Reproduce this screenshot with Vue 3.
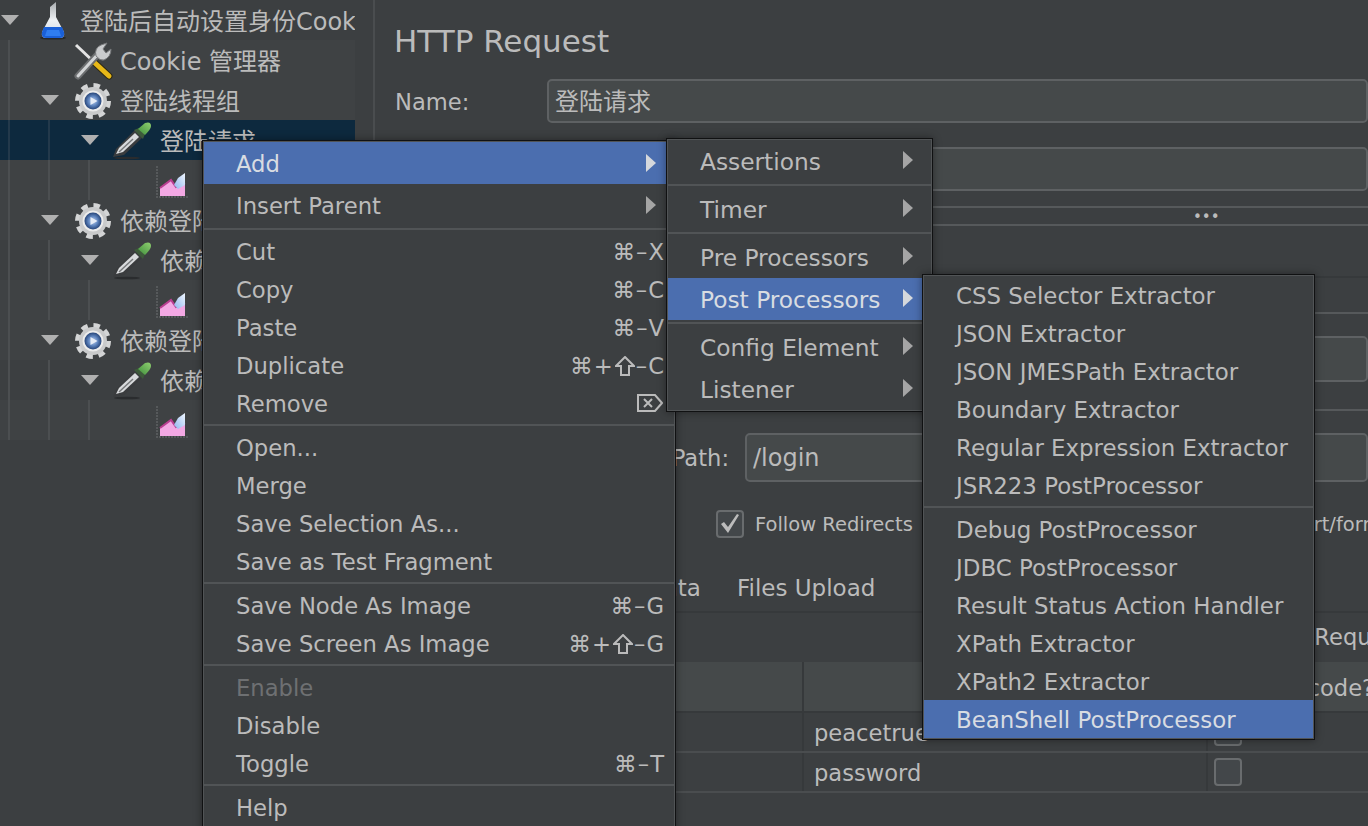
<template>
  <div class="app">
    <!-- shared tree icons -->
    <svg class="defs" width="0" height="0">
      <defs>
        <linearGradient id="glass" x1="0" y1="0" x2="0" y2="1">
          <stop offset="0" stop-color="#a9adb0" />
          <stop offset="0.5" stop-color="#eef1f4" />
          <stop offset="1" stop-color="#cfd8e2" />
        </linearGradient>
        <radialGradient id="hub" cx="0.5" cy="0.5" r="0.55">
          <stop offset="0" stop-color="#c4d2ec" />
          <stop offset="0.5" stop-color="#5f85bf" />
          <stop offset="1" stop-color="#1a3669" />
        </radialGradient>
        <linearGradient id="bulb" x1="0" y1="1" x2="1" y2="0">
          <stop offset="0" stop-color="#3f8f3c" />
          <stop offset="1" stop-color="#8fcf70" />
        </linearGradient>
        <linearGradient id="shard" x1="1" y1="0" x2="0" y2="1">
          <stop offset="0" stop-color="#f0f6ff" />
          <stop offset="1" stop-color="#8fb6ee" />
        </linearGradient>
      </defs>
      <symbol id="i-flask" viewBox="0 0 40 40">
        <ellipse cx="20" cy="38" rx="13" ry="1.6" fill="#26282a" />
        <path d="M17 7 L23 2 L23 17 L31 32 Q32 38 27 38 L13 38 Q8 38 9 32 L17 17 Z" fill="url(#glass)" />
        <path d="M11 27 L29 27 L31 32 Q32 38 27 38 L13 38 Q8 38 9 32 Z" fill="#1a60d8" />
        <path d="M14 30 L26 30 L28 36 L12 36 Z" fill="#2f7df0" />
      </symbol>
      <symbol id="i-tools" viewBox="0 0 40 40">
        <path d="M3 5 L22 23" stroke="#e4e4e4" stroke-width="3" />
        <path d="M22 23 L36 36" stroke="#2e2a14" stroke-width="7" stroke-linecap="round" />
        <path d="M22 23 L36 36" stroke="#e8b818" stroke-width="5" stroke-linecap="round" />
        <path d="M5 36 L26 13" stroke="#6c6e70" stroke-width="7" stroke-linecap="round" />
        <path d="M5 36 L26 13" stroke="#d2d4d6" stroke-width="3" stroke-linecap="round" />
        <path d="M23 16 Q21 8 28 5 L34 3 L30 9 L33 13 L38 9 Q38 17 31 20 Q27 21 23 16 Z" fill="#c9cbcd" stroke="#77797b" stroke-width="1" />
      </symbol>
      <symbol id="i-gear" viewBox="0 0 40 40">
        <circle cx="20" cy="21" r="15" fill="none" stroke="#d4d5d6" stroke-width="6" stroke-dasharray="6.2 5.58" />
        <circle cx="20" cy="21" r="14" fill="#c9cacb" />
        <circle cx="20" cy="21" r="10.5" fill="#ececec" />
        <circle cx="20" cy="21" r="8.5" fill="url(#hub)" />
        <path d="M17.5 17 L24.5 21 L17.5 25 Z" fill="#e6ecf6" />
      </symbol>
      <symbol id="i-dropper" viewBox="0 0 40 40">
        <ellipse cx="14" cy="38" rx="13" ry="1.3" fill="#2a2c2e" />
        <path d="M0 37 L3 29 L22 10 L30 17 L11 35 Z" fill="#3a3c3e" />
        <path d="M3 34 L6 28 L22 13 L26 17 L10 32 Z" fill="#d8dadc" />
        <path d="M6 32 L20 19" stroke="#77797b" stroke-width="1.5" />
        <path d="M21 10 L26 8 L32 14 L30 19 Z" fill="#3d5a3a" />
        <path d="M25 9 L32 3 Q38 1 38 6 Q38 9 32 15 Z" fill="url(#bulb)" />
      </symbol>
      <symbol id="i-chart" viewBox="0 0 40 40">
        <path d="M4 6 L4 37 L36 37" fill="none" stroke="#56595b" stroke-width="2" stroke-dasharray="2 1" />
        <path d="M7 36 L7 28 L18 20 L23 27 L32 23 L32 36 Z" fill="#f3a8e4" stroke-width="0" />
        <path d="M7 28 L18 20 L23 27 L32 23" fill="none" stroke="#b93f92" stroke-width="2" />
        <path d="M32 13 L25 18 L21 25 L25 29 L32 25 Z" fill="url(#shard)" />
      </symbol>
    </svg>

    <!-- test plan tree -->
    <aside class="tree">
      <div
        v-for="(row, i) in treeRows"
        :key="i"
        class="tree-row"
        :class="{ selected: row.selected, alt: row.alt }"
      >
        <span v-for="n in row.guides" :key="n" class="cell guide"></span>
        <span class="cell">
          <i v-if="row.open" class="twisty"></i>
        </span>
        <svg class="tree-icon" width="40" height="40"><use :href="'#i-' + row.icon" /></svg>
        <span class="tree-label">{{ row.label }}</span>
      </div>
    </aside>

    <!-- http request form -->
    <main class="panel">
      <h1 class="title">HTTP Request</h1>

      <div class="field-row">
        <label class="field-label">Name:</label>
        <input class="text-input name-input" value="登陆请求" />
      </div>
      <div class="field-row comments">
        <label class="field-label">Comments:</label>
        <input class="text-input" value="" />
      </div>

      <div class="collapse-bar"><span>•••</span></div>

      <div class="rule-dark"></div>
      <div class="rule-light"></div>
      <input class="text-input wide-input" value="" />
      <div class="rule-light second"></div>

      <div class="path-row">
        <label class="path-label">Path:</label>
        <input class="text-input" value="/login" />
      </div>

      <div class="check-row">
        <span class="check-text first">Redirect Automatically</span>
        <span class="checkbox on">
          <svg width="24" height="24" viewBox="0 0 24 24"><path d="M3 12 L6 10 L10 15 L19 2 L21 3 L10 21 Z" fill="#bcbcbc" /></svg>
        </span>
        <span class="check-text">Follow Redirects</span>
        <span class="check-text last">Use multipart/form-data</span>
      </div>

      <div class="tabs">
        <span>Parameters</span>
        <span>Body Data</span>
        <span>Files Upload</span>
      </div>

      <div class="send-row">Send Parameters With the Request:</div>

      <div class="table">
        <div class="t-row t-head">
          <div class="t-cell">Name:</div>
          <div class="t-cell">Value</div>
          <div class="t-cell encode">URL Encode?</div>
        </div>
        <div v-for="p in params" :key="p.value" class="t-row">
          <div class="t-cell">{{ p.name }}</div>
          <div class="t-cell">{{ p.value }}</div>
          <div class="t-cell check-cell"><span class="checkbox"></span></div>
        </div>
      </div>
    </main>

    <!-- context menu and its submenus -->
    <div v-for="menu in menus" :key="menu.id" class="menu" :class="menu.id">
      <template v-for="(item, i) in menu.items" :key="i">
        <div v-if="item.sep" class="menu-sep"></div>
        <div
          v-else
          class="menu-item"
          :class="{ active: item.active, disabled: item.disabled, tall: item.arrow }"
        >
          <span>{{ item.label }}</span>
          <i v-if="item.arrow" class="arrow"></i>
          <span v-else-if="item.keys" class="keys">
            <template v-if="item.shift">⌘+<svg class="shift-key" width="20" height="20" viewBox="0 0 20 20"><path d="M10 1 L19 10 H14 V19 H6 V10 H1 Z" fill="none" stroke="#bbbbbb" stroke-width="2" /></svg></template>{{ item.keys }}
          </span>
          <svg v-else-if="item.del" class="del-key" width="26" height="18" viewBox="0 0 26 18">
            <path d="M1 1 H18 L25 9 L18 17 H1 Z M7 5 L15 13 M15 5 L7 13" fill="none" stroke="#bbbbbb" stroke-width="2" />
          </svg>
        </div>
      </template>
    </div>
  </div>
</template>

<script setup>
const treeRows = [
  { guides: 0, open: true, icon: 'flask', label: '登陆后自动设置身份Cookie' },
  { guides: 1, open: false, icon: 'tools', label: 'Cookie 管理器', alt: true },
  { guides: 1, open: true, icon: 'gear', label: '登陆线程组', alt: true },
  { guides: 2, open: true, icon: 'dropper', label: '登陆请求', selected: true },
  { guides: 3, open: false, icon: 'chart', label: '', alt: true },
  { guides: 1, open: true, icon: 'gear', label: '依赖登陆线程组', alt: true },
  { guides: 2, open: true, icon: 'dropper', label: '依赖登陆请求' },
  { guides: 3, open: false, icon: 'chart', label: '', alt: true },
  { guides: 1, open: true, icon: 'gear', label: '依赖登陆线程组', alt: true },
  { guides: 2, open: true, icon: 'dropper', label: '依赖登陆请求' },
  { guides: 3, open: false, icon: 'chart', label: '', alt: true },
]

const params = [
  { name: 'username', value: 'peacetrue' },
  { name: 'password', value: 'password' },
]

const sep = { sep: true }

const menus = [
  {
    id: 'menu-main',
    items: [
      { label: 'Add', arrow: true, active: true },
      { label: 'Insert Parent', arrow: true },
      sep,
      { label: 'Cut', keys: '⌘–X' },
      { label: 'Copy', keys: '⌘–C' },
      { label: 'Paste', keys: '⌘–V' },
      { label: 'Duplicate', shift: true, keys: '–C' },
      { label: 'Remove', del: true },
      sep,
      { label: 'Open...' },
      { label: 'Merge' },
      { label: 'Save Selection As...' },
      { label: 'Save as Test Fragment' },
      sep,
      { label: 'Save Node As Image', keys: '⌘–G' },
      { label: 'Save Screen As Image', shift: true, keys: '–G' },
      sep,
      { label: 'Enable', disabled: true },
      { label: 'Disable' },
      { label: 'Toggle', keys: '⌘–T' },
      sep,
      { label: 'Help' },
    ],
  },
  {
    id: 'menu-add',
    items: [
      { label: 'Assertions', arrow: true },
      sep,
      { label: 'Timer', arrow: true },
      sep,
      { label: 'Pre Processors', arrow: true },
      { label: 'Post Processors', arrow: true, active: true },
      sep,
      { label: 'Config Element', arrow: true },
      { label: 'Listener', arrow: true },
    ],
  },
  {
    id: 'menu-post',
    items: [
      { label: 'CSS Selector Extractor' },
      { label: 'JSON Extractor' },
      { label: 'JSON JMESPath Extractor' },
      { label: 'Boundary Extractor' },
      { label: 'Regular Expression Extractor' },
      { label: 'JSR223 PostProcessor' },
      sep,
      { label: 'Debug PostProcessor' },
      { label: 'JDBC PostProcessor' },
      { label: 'Result Status Action Handler' },
      { label: 'XPath Extractor' },
      { label: 'XPath2 Extractor' },
      { label: 'BeanShell PostProcessor', active: true },
    ],
  },
]
</script>

<style>
body {
  background: #3c3f41;
}
</style>

<style scoped>
.app {
  position: relative;
  display: flex;
  width: 1368px;
  height: 826px;
  overflow: hidden;
  background: #3c3f41;
  color: #bbbbbb;
  font-family: "DejaVu Sans", "Noto Sans CJK SC", sans-serif;
  font-size: 22.6px;
}

.defs {
  position: absolute;
}

/* tree */
.tree {
  flex: none;
  width: 355px;
  margin-right: 18px;
  overflow: hidden;
}

.tree-row {
  display: flex;
  align-items: center;
  height: 40px;
  font-size: 24px;
  white-space: nowrap;
}

.tree-row.alt {
  background: #3f4244;
}

.tree-row.selected {
  background: #0d293e;
}

.tree-label {
  margin-top: -2px;
}

.cell {
  flex: none;
  position: relative;
  display: block;
  width: 40px;
  height: 40px;
}

.guide::before {
  content: "";
  position: absolute;
  left: 8px;
  top: 0;
  bottom: 0;
  width: 2px;
  background: #4c4f51;
}

.selected .guide::before {
  background: #23394b;
}

.twisty {
  position: absolute;
  left: 1px;
  top: 15px;
  border-left: 9px solid transparent;
  border-right: 9px solid transparent;
  border-top: 10px solid #b0b0b0;
}

.tree-icon {
  flex: none;
  margin-left: -7px;
  margin-right: 7px;
}

/* form */
.panel {
  flex: none;
  width: 995px;
  padding-left: 20px;
  border-left: 2px solid #4a4d4f;
  box-sizing: border-box;
}

.title {
  margin: 21px 0 0 -1px;
  height: 41px;
  line-height: 41px;
  font-size: 31px;
  font-weight: normal;
}

.field-row {
  display: flex;
  align-items: center;
  height: 44px;
  margin-top: 17px;
}

.field-row.comments {
  margin-top: 24px;
}

.field-label {
  flex: none;
  width: 152px;
  padding-top: 2px;
}

.text-input {
  flex: 1;
  min-width: 0;
  height: 100%;
  box-sizing: border-box;
  padding: 0 6px;
  border: 2px solid #5e6163;
  border-radius: 5px;
  background: #45494a;
  color: #bbbbbb;
  font: inherit;
  font-size: 24px;
  outline: none;
}

.name-input {
  padding-bottom: 3px;
}

.collapse-bar {
  display: flex;
  align-items: center;
  height: 20px;
  margin-top: 15px;
  padding: 2px 0 0 798px;
  border-top: 2px solid #56595b;
  border-bottom: 2px solid #56595b;
  box-sizing: border-box;
  font-size: 15px;
  line-height: 1;
}

.rule-dark {
  height: 2px;
  margin-top: 50px;
  background: #36393b;
}

.rule-light {
  height: 2px;
  margin-top: 34px;
  background: #56595b;
}

.wide-input {
  display: block;
  width: 100%;
  height: 46px;
  margin-top: 22px;
  margin-left: 0;
}

.rule-light.second {
  margin-top: 27px;
}

.path-row {
  display: flex;
  align-items: center;
  height: 49px;
  margin-top: 22px;
}

.path-label {
  flex: none;
  width: 350px;
  padding-right: 16px;
  box-sizing: border-box;
  text-align: right;
}

.check-row {
  display: flex;
  align-items: center;
  height: 28px;
  margin-top: 28px;
  font-size: 19.5px;
  white-space: nowrap;
}

.check-text.first {
  margin-left: 54px;
  margin-right: 46px;
}

.check-text.last {
  margin-left: 284px;
}

.checkbox {
  flex: none;
  display: flex;
  align-items: center;
  justify-content: center;
  width: 28px;
  height: 28px;
  box-sizing: border-box;
  border: 2px solid #696c6e;
  border-radius: 4px;
  background: #43474a;
}

.checkbox.on {
  margin-right: 11px;
}

.tabs {
  display: flex;
  gap: 36px;
  align-items: center;
  height: 46px;
  margin-top: 27px;
  padding-left: 18px;
  font-size: 23px;
  white-space: nowrap;
  border-bottom: 2px solid #36393b;
}

.send-row {
  height: 49px;
  line-height: 49px;
  padding-left: 616px;
  white-space: nowrap;
}

.table {
  margin-left: -20px;
}

.t-row {
  display: grid;
  grid-template-columns: 429px 404px 1fr;
  height: 40px;
  border-bottom: 2px solid #4a4d4f;
  box-sizing: border-box;
}

.t-head {
  height: 51px;
  background: #45494a;
  border-bottom-color: #36393b;
}

.t-cell {
  display: flex;
  align-items: center;
  padding: 2px 0 0 10px;
  border-right: 2px solid #36393b;
  white-space: nowrap;
}

.t-head .t-cell {
  justify-content: center;
  padding-left: 0;
}

.t-cell:last-child {
  border-right: none;
}

.t-head .t-cell.encode {
  justify-content: flex-start;
  padding-left: 19px;
}

.t-cell.check-cell {
  padding: 0 0 0 6px;
}

/* menus */
.menu {
  position: absolute;
  box-sizing: border-box;
  border: 1px solid #101112;
  background: #3c3f41;
  box-shadow: inset 0 0 0 1px #515456, 0 0 8px rgba(0, 0, 0, 0.4);
  padding: 1px;
  white-space: nowrap;
}

.menu-main {
  left: 202px;
  top: 140px;
  width: 474px;
  height: 700px;
  font-size: 22.7px;
}

.menu-add {
  left: 666px;
  top: 138px;
  width: 267px;
  font-size: 23.3px;
}

.menu-post {
  left: 922px;
  top: 274px;
  width: 393px;
  font-size: 22.9px;
}

.menu-item {
  display: flex;
  align-items: center;
  justify-content: space-between;
  height: 38px;
  box-sizing: border-box;
  padding: 2px 9px 0 32px;
}

.menu-item.tall {
  height: 42px;
}

.menu-add .menu-item {
  padding-top: 0;
}

.menu-item.active {
  background: #4b6eaf;
  color: #d8dce2;
}

.menu-item.disabled {
  color: #6e7072;
}

.menu-sep {
  height: 2px;
  margin: 2px 0;
  background: #515456;
}

.arrow {
  margin-right: 9px;
  margin-top: -2px;
  border-top: 9px solid transparent;
  border-bottom: 9px solid transparent;
  border-left: 10px solid #a5a5a5;
}

.active .arrow {
  border-left-color: #d5d8dc;
}

.keys {
  display: flex;
  align-items: center;
  letter-spacing: 1px;
}

.shift-key {
  margin: 0 1px;
}

.del-key {
  margin-right: 2px;
  margin-top: -2px;
}
</style>
